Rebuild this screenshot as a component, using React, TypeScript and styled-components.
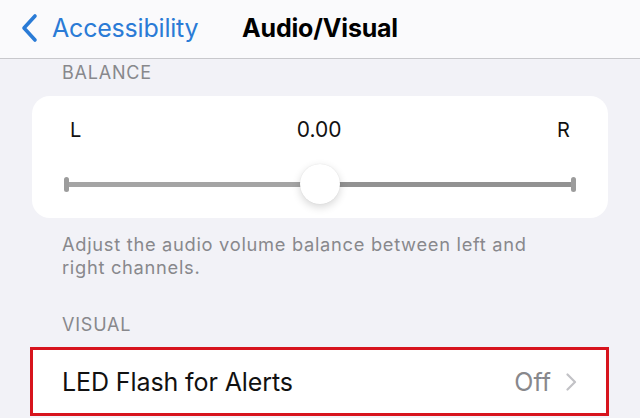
import React from "react";
import styled, {createGlobalStyle} from "styled-components";

const COLORS = {
    page: "#f2f2f7",
    nav: "#fafafc",
    navBorder: "#c8c8cc",
    blue: "#2a7bd6",
    label: "#111111",
    secondary: "#88888c",
    track: "#9c9c9c",
    chevron: "#c2c2c6",
    highlight: "#d7141d",
}

const GlobalStyle = createGlobalStyle`
  html, body {
    margin: 0;
    padding: 0;
    background: ${COLORS.page};
  }

  body {
    font-family: Inter, "Noto Sans", "Liberation Sans", sans-serif;
    -webkit-font-smoothing: antialiased;
  }
`

const StyledScreen = styled.div`
  width: 640px;
  height: 418px;
  overflow: hidden;
  background: ${COLORS.page};
`

const StyledNavBar = styled.header`
  height: 58px;
  display: grid;
  grid-template-columns: 1fr auto 1fr;
  align-items: center;
  background: ${COLORS.nav};
  border-bottom: 1.5px solid ${COLORS.navBorder};
  box-sizing: content-box;
`

const StyledBackButton = styled.button`
  display: flex;
  align-items: center;
  gap: 14px;
  padding: 0 0 2px 20px;
  border: 0;
  background: none;
  color: ${COLORS.blue};
  font: inherit;
  font-size: 25px;
  letter-spacing: -0.2px;
  cursor: pointer;
  justify-self: start;
`

const StyledTitle = styled.h1`
  margin: 0 0 2px;
  font-size: 25px;
  font-weight: 700;
  color: #000;
  letter-spacing: -0.2px;
`

const StyledContent = styled.main`
  padding: 0 32px;
`

const StyledSectionHeader = styled.div<{ spaceAbove: number }>`
  margin-top: ${props => props.spaceAbove}px;
  padding-left: 30px;
  font-size: 18px;
  line-height: 22px;
  color: ${COLORS.secondary};
  letter-spacing: 0.8px;
`

const StyledCard = styled.section`
  margin-top: 12px;
  background: #fff;
  border-radius: 18px;
  padding: 22px 32px 12px;
`

const StyledLabels = styled.div`
  display: flex;
  justify-content: space-between;
  align-items: center;
  padding: 0 6px;
  font-size: 20px;
  line-height: 24px;
  color: ${COLORS.label};
`

const StyledValue = styled.span`
  font-size: 21px;
`

const StyledSlider = styled.div`
  position: relative;
  margin-top: 20px;
  height: 44px;
  display: flex;
  align-items: center;
`

const StyledTrack = styled.div`
  flex: 1;
  height: 5px;
  background: linear-gradient(to right, #a4a4a4 50%, #929292 50%);
`

const StyledCap = styled.div`
  width: 5px;
  height: 15px;
  border-radius: 3px;
  background: ${COLORS.track};
`

const StyledThumb = styled.div`
  position: absolute;
  top: 2px;
  width: 40px;
  height: 40px;
  margin-left: -20px;
  border-radius: 50%;
  background: #fff;
  box-shadow: 0 3px 8px rgba(0, 0, 0, 0.16), 0 0 1px rgba(0, 0, 0, 0.12);
`

const StyledFooter = styled.p`
  margin: 15px 0 0;
  padding: 0 50px 0 30px;
  font-size: 18.3px;
  line-height: 23px;
  letter-spacing: 0.7px;
  color: ${COLORS.secondary};
`

const StyledRow = styled.div`
  margin: 11px -1px 0 -2px;
  height: 63px;
  display: flex;
  align-items: center;
  justify-content: space-between;
  background: #fff;
  border: 3px solid ${COLORS.highlight};
  padding: 0 29px 0 29px;
`

const StyledRowTitle = styled.span`
  font-size: 25px;
  color: ${COLORS.label};
  letter-spacing: -0.1px;
`

const StyledRowDetail = styled.span`
  display: flex;
  align-items: center;
  gap: 15px;
  font-size: 25px;
  color: ${COLORS.secondary};
`

const BackChevron = () => (
    <svg width="18" height="30" viewBox="0 0 18 30" fill="none">
        <path d="M15 3 L4 15 L15 27" stroke={COLORS.blue} strokeWidth="3.6" strokeLinecap="round"
              strokeLinejoin="round"/>
    </svg>
)

const RowChevron = () => (
    <svg width="11" height="18" viewBox="0 0 11 18" fill="none">
        <path d="M1.5 1.5 L9 9 L1.5 16.5" stroke={COLORS.chevron} strokeWidth="2.2" strokeLinecap="round"
              strokeLinejoin="round"/>
    </svg>
)

const BalanceSlider: React.FC<{ value: number }> = ({value}) => {
    // value runs from -1 (left) to 1 (right)
    const percent = (value + 1) * 50
    return (
        <StyledSlider>
            <StyledCap/>
            <StyledTrack/>
            <StyledCap/>
            <StyledThumb style={{left: `${percent}%`}}/>
        </StyledSlider>
    )
}

const App: React.FC = () => {
    const balance = 0

    return (
        <>
            <GlobalStyle/>
            <StyledScreen>
                <StyledNavBar>
                    <StyledBackButton>
                        <BackChevron/>
                        Accessibility
                    </StyledBackButton>
                    <StyledTitle>Audio/Visual</StyledTitle>
                    <div/>
                </StyledNavBar>
                <StyledContent>
                    <StyledSectionHeader spaceAbove={3}>BALANCE</StyledSectionHeader>
                    <StyledCard>
                        <StyledLabels>
                            <span>L</span>
                            <StyledValue>{balance.toFixed(2)}</StyledValue>
                            <span>R</span>
                        </StyledLabels>
                        <BalanceSlider value={balance}/>
                    </StyledCard>
                    <StyledFooter>
                        Adjust the audio volume balance between left and right channels.
                    </StyledFooter>
                    <StyledSectionHeader spaceAbove={35}>VISUAL</StyledSectionHeader>
                    <StyledRow>
                        <StyledRowTitle>LED Flash for Alerts</StyledRowTitle>
                        <StyledRowDetail>
                            Off
                            <RowChevron/>
                        </StyledRowDetail>
                    </StyledRow>
                </StyledContent>
            </StyledScreen>
        </>
    )
}

export default App
